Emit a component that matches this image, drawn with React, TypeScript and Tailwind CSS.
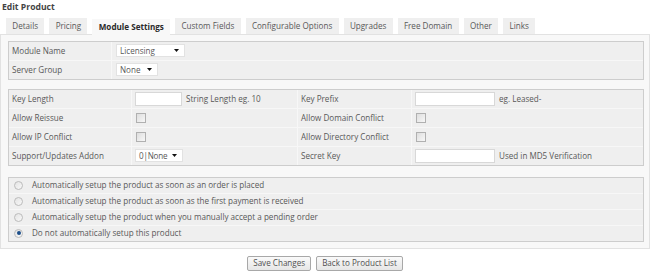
const tabs = [
  'Details',
  'Pricing',
  'Module Settings',
  'Custom Fields',
  'Configurable Options',
  'Upgrades',
  'Free Domain',
  'Other',
  'Links',
]

function Select({ value, width = 'gap-[7px]' }: { value: string; width?: string }) {
  return (
    <div className={`flex h-[13px] items-center justify-between border border-[#e2e2e2] bg-white pl-[3px] pr-[5px] ${width}`}>
      <span className="whitespace-nowrap">{value}</span>
      <svg width="5" height="3" viewBox="0 0 5 3" className="shrink-0">
        <path d="M0 0h5L2.5 3z" fill="#111" />
      </svg>
    </div>
  )
}

function Checkbox() {
  return <div className="h-[10px] w-[10px] border border-[#b0b0b0] bg-gradient-to-br from-[#dedede] to-[#f7f7f7]" />
}

function TextInput({ width }: { width: string }) {
  return <div className={`h-[14px] border border-[#d8d8d8] bg-white ${width}`} />
}

function Radio({ checked }: { checked?: boolean }) {
  return (
    <div className="flex h-[9px] w-[9px] items-center justify-center rounded-full border border-[#bcbcbc] bg-gradient-to-br from-[#e4e4e4] to-[#f8f8f8]">
      {checked && <div className="h-[4px] w-[4px] rounded-full bg-[#1d4f8a]" />}
    </div>
  )
}

const setupOptions = [
  'Automatically setup the product as soon as an order is placed',
  'Automatically setup the product as soon as the first payment is received',
  'Automatically setup the product when you manually accept a pending order',
  'Do not automatically setup this product',
]

export default function App() {
  return (
    <div className="h-[272px] w-[650px] overflow-hidden bg-white text-[8.1px] leading-none text-[#585858]" style={{ fontFamily: '"Open Sans", sans-serif' }}>
      <div className="pl-[2px] pt-[3px] text-[8.6px] font-bold text-[#444]">Edit Product</div>

      {/* tabs */}
      <div className="mt-[6px] flex gap-[5px] pl-[6px]">
        {tabs.map((t) => (
          <div
            key={t}
            className={`flex h-[16px] items-center px-[6.3px] ${
              t === 'Module Settings'
                ? 'relative top-px bg-[#f8f8f8] font-bold text-[#2a2a2a]'
                : 'bg-[#efefef] text-[#585858]'
            }`}
          >
            {t}
          </div>
        ))}
      </div>

      {/* tab body */}
      <div className="border border-[#e2e2e2] bg-[#f8f8f8] pb-[6px] pl-[7px] pr-[5px] pt-[6px]">
        <div className="grid grid-cols-[102px_1fr] gap-px border border-[#cdcdcd] bg-[#f7f7f7]">
          <div className="flex h-[18px] items-center bg-[#efefef] pl-[3px]">Module Name</div>
          <div className="flex h-[18px] items-center bg-[#efefef] pl-[4px]">
            <Select value="Licensing" width="w-[69px]" />
          </div>
          <div className="flex h-[18px] items-center bg-[#efefef] pl-[3px]">Server Group</div>
          <div className="flex h-[18px] items-center bg-[#efefef] pl-[4px]">
            <Select value="None" />
          </div>
        </div>

        <div className="mt-[9px] grid grid-cols-[122px_165px_113px_1fr] gap-px border border-[#cdcdcd] bg-[#f7f7f7]">
          <div className="flex h-[18px] items-center bg-[#efefef] pl-[3px]">Key Length</div>
          <div className="flex h-[18px] items-center gap-[4px] bg-[#efefef] pl-[3px]">
            <TextInput width="w-[47px]" />
            <span>String Length eg. 10</span>
          </div>
          <div className="flex h-[18px] items-center bg-[#efefef] pl-[3px]">Key Prefix</div>
          <div className="flex h-[18px] items-center gap-[4px] bg-[#efefef] pl-[3px]">
            <TextInput width="w-[80px]" />
            <span>eg. Leased-</span>
          </div>

          <div className="flex h-[18px] items-center bg-[#efefef] pl-[3px]">Allow Reissue</div>
          <div className="flex h-[18px] items-center bg-[#efefef] pl-[4px]">
            <Checkbox />
          </div>
          <div className="flex h-[18px] items-center bg-[#efefef] pl-[3px]">Allow Domain Conflict</div>
          <div className="flex h-[18px] items-center bg-[#efefef] pl-[4px]">
            <Checkbox />
          </div>

          <div className="flex h-[18px] items-center bg-[#efefef] pl-[3px]">Allow IP Conflict</div>
          <div className="flex h-[18px] items-center bg-[#efefef] pl-[4px]">
            <Checkbox />
          </div>
          <div className="flex h-[18px] items-center bg-[#efefef] pl-[3px]">Allow Directory Conflict</div>
          <div className="flex h-[18px] items-center bg-[#efefef] pl-[4px]">
            <Checkbox />
          </div>

          <div className="flex h-[18px] items-center bg-[#efefef] pl-[3px]">Support/Updates Addon</div>
          <div className="flex h-[18px] items-center bg-[#efefef] pl-[3px]">
            <Select value="0|None" width="gap-[5px] tracking-[-0.2px]" />
          </div>
          <div className="flex h-[18px] items-center bg-[#efefef] pl-[3px]">Secret Key</div>
          <div className="flex h-[18px] items-center gap-[4px] bg-[#efefef] pl-[3px]">
            <TextInput width="w-[80px]" />
            <span>Used in MD5 Verification</span>
          </div>
        </div>

        <div className="mt-[11px] flex flex-col gap-px border border-[#cdcdcd] bg-[#f7f7f7]">
          {setupOptions.map((opt, i) => (
            <div key={opt} className="flex h-[15px] items-center gap-[9px] bg-[#efefef] pl-[5px]">
              <Radio checked={i === 3} />
              <span>{opt}</span>
            </div>
          ))}
        </div>
      </div>

      {/* actions */}
      <div className="mt-[7px] flex justify-center gap-[5px]">
        <button className="h-[15px] rounded-[2px] border border-[#a8a8a8] bg-gradient-to-b from-[#fafafa] to-[#e6e6e6] px-[5px] text-[#505050]">
          Save Changes
        </button>
        <button className="h-[15px] rounded-[2px] border border-[#a8a8a8] bg-gradient-to-b from-[#fafafa] to-[#e6e6e6] px-[5px] text-[#505050]">
          Back to Product List
        </button>
      </div>
    </div>
  )
}
